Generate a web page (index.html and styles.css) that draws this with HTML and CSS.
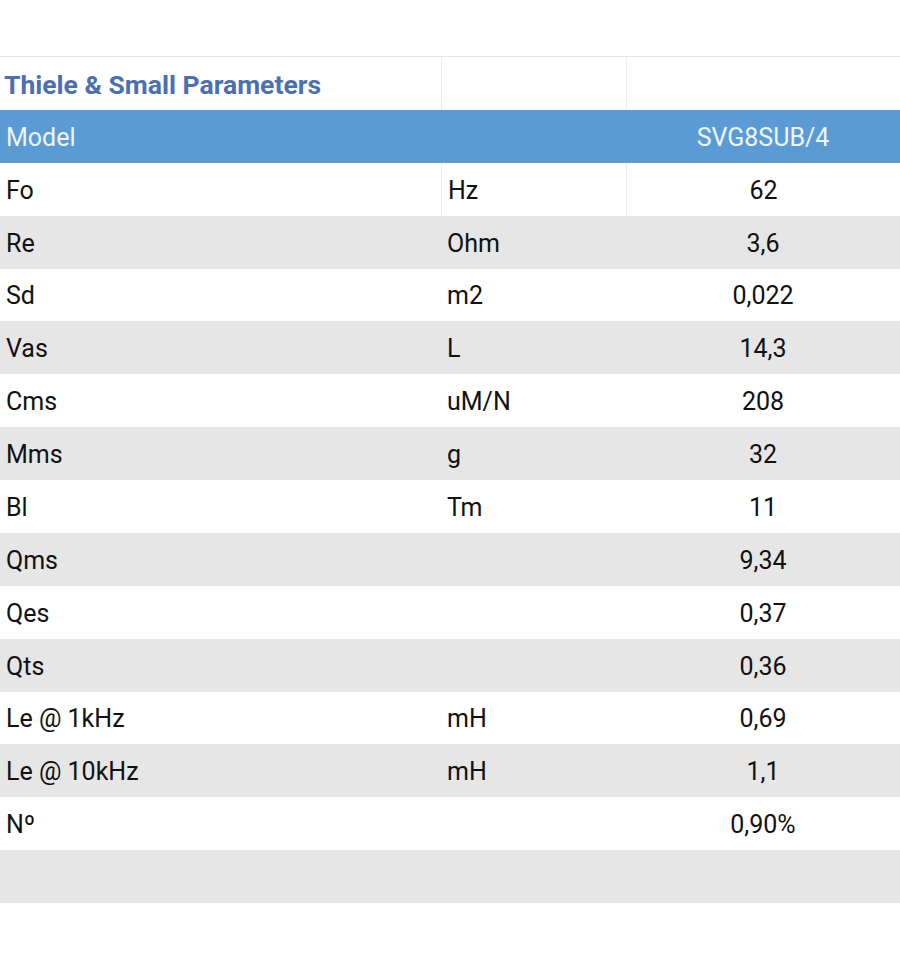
FILE: index.html
```html
<!DOCTYPE html>
<html>
<head>
<meta charset="utf-8">
<link rel="stylesheet" href="styles.css">
</head>
<body>
<div class="ts-table">
  <div class="row title-row"><div class="cell title">Thiele &amp; Small Parameters</div><div class="cell"></div><div class="cell"></div></div>
  <div class="row head-row"><div class="cell">Model</div><div class="cell"></div><div class="cell val">SVG8SUB/4</div></div>
  <div class="row white bordered"><div class="cell">Fo</div><div class="cell">Hz</div><div class="cell val">62</div></div>
  <div class="row gray"><div class="cell">Re</div><div class="cell">Ohm</div><div class="cell val">3,6</div></div>
  <div class="row white"><div class="cell">Sd</div><div class="cell">m2</div><div class="cell val">0,022</div></div>
  <div class="row gray"><div class="cell">Vas</div><div class="cell">L</div><div class="cell val">14,3</div></div>
  <div class="row white"><div class="cell">Cms</div><div class="cell">uM/N</div><div class="cell val">208</div></div>
  <div class="row gray"><div class="cell">Mms</div><div class="cell">g</div><div class="cell val">32</div></div>
  <div class="row white"><div class="cell">Bl</div><div class="cell">Tm</div><div class="cell val">11</div></div>
  <div class="row gray"><div class="cell">Qms</div><div class="cell"></div><div class="cell val">9,34</div></div>
  <div class="row white"><div class="cell">Qes</div><div class="cell"></div><div class="cell val">0,37</div></div>
  <div class="row gray"><div class="cell">Qts</div><div class="cell"></div><div class="cell val">0,36</div></div>
  <div class="row white"><div class="cell">Le @ 1kHz</div><div class="cell">mH</div><div class="cell val">0,69</div></div>
  <div class="row gray"><div class="cell">Le @ 10kHz</div><div class="cell">mH</div><div class="cell val">1,1</div></div>
  <div class="row white"><div class="cell">Nº</div><div class="cell"></div><div class="cell val">0,90%</div></div>
  <div class="row gray"><div class="cell"></div><div class="cell"></div><div class="cell"></div></div>
</div>
</body>
</html>
```
FILE: styles.css
```css
html, body {
  margin: 0;
  padding: 0;
  background: #ffffff;
}
body {
  padding-top: 56px;
  font-family: Roboto, "Liberation Sans", sans-serif;
  color: #111111;
}
.ts-table {
  width: 900px;
  border-top: 1px solid #e4e4e4;
}
.row {
  display: grid;
  grid-template-columns: 441px 185px 274px;
  height: 52.875px;
  font-size: 25px;
  font-weight: 400;
}
.cell {
  display: flex;
  align-items: center;
  padding-left: 6px;
  padding-top: 2px;
  white-space: nowrap;
}
.cell.val {
  justify-content: center;
  padding-left: 0;
}
.title-row .cell,
.bordered .cell {
  border-left: 1px solid #ececec;
}
.title-row .cell:first-child,
.bordered .cell:first-child {
  border-left: none;
}
.title-row {
  background: #ffffff;
}
.title {
  color: #4a70b3;
  font-weight: 700;
  font-size: 26.5px;
  padding-left: 4px;
}
.head-row {
  background: #5b9bd5;
  color: #eef5fb;
}
.white {
  background: #ffffff;
}
.gray {
  background: #e6e6e6;
}
```
